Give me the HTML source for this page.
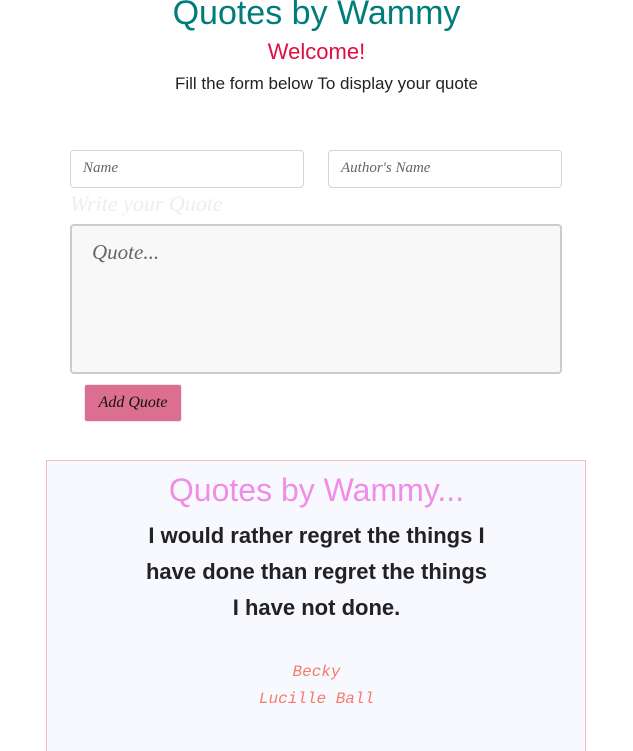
<!DOCTYPE html>
<html><head><style>
html,body{margin:0;width:633px;height:751px;overflow:hidden}
body{background:#fff;font-family:"Liberation Sans",sans-serif;position:relative}
.a{position:absolute;left:0;width:633px;text-align:center;white-space:nowrap}
.inp{position:absolute;box-sizing:border-box;border:1px solid #d4d4da;border-radius:4px;background:#fff;height:38px;top:150px;font-family:"Liberation Serif",serif;font-style:italic;color:#666;font-size:15px;padding:9px 12px}
</style></head><body>
<div class="a" style="top:-8px;font-size:34px;color:#007d7b;line-height:42px">Quotes by Wammy</div>
<div class="a" style="top:38px;font-size:22px;color:#df0e43;line-height:28px">Welcome!</div>
<div class="a" style="top:73px;font-size:17px;color:#222;line-height:22px;padding-left:20px;box-sizing:border-box">Fill the form below To display your quote</div>
<div class="inp" style="left:70px;width:234px">Name</div>
<div class="inp" style="left:328px;width:234px">Author's Name</div>
<div style="position:absolute;left:70px;top:191px;font-family:'Liberation Serif',serif;font-style:italic;font-size:22px;color:#eee">Write your Quote</div>
<div style="position:absolute;left:70px;top:224px;width:492px;height:150px;box-sizing:border-box;border:2px solid #ccc;border-radius:4px;background:#f8f8f8;padding:14px 20px;font-family:'Liberation Serif',serif;font-style:italic;font-size:21px;color:#666">Quote...</div>
<div style="position:absolute;left:85px;top:385px;width:96px;height:36px;background:#dc6e91;border-radius:2px;box-shadow:0 0 0 1px #f3e6ea;font-family:'Liberation Serif',serif;font-style:italic;font-size:16px;color:#111;line-height:36px;text-align:center">Add Quote</div>
<div style="position:absolute;left:46px;top:460px;width:540px;height:291px;box-sizing:border-box;border:1px solid #f9b6cc;border-bottom:none;background:#f8f9fe"></div>
<div class="a" style="top:470px;font-size:32px;color:#f08de6;line-height:40px">Quotes by Wammy...</div>
<div class="a" style="top:518px;font-size:22px;font-weight:bold;color:#222;line-height:36px">I would rather regret the things I<br>have done than regret the things<br>I have not done.</div>
<div class="a" style="top:659px;font-family:'Liberation Mono',monospace;font-style:italic;font-size:16px;color:#f47c6c;line-height:27px">Becky<br>Lucille Ball</div>
</body></html>
